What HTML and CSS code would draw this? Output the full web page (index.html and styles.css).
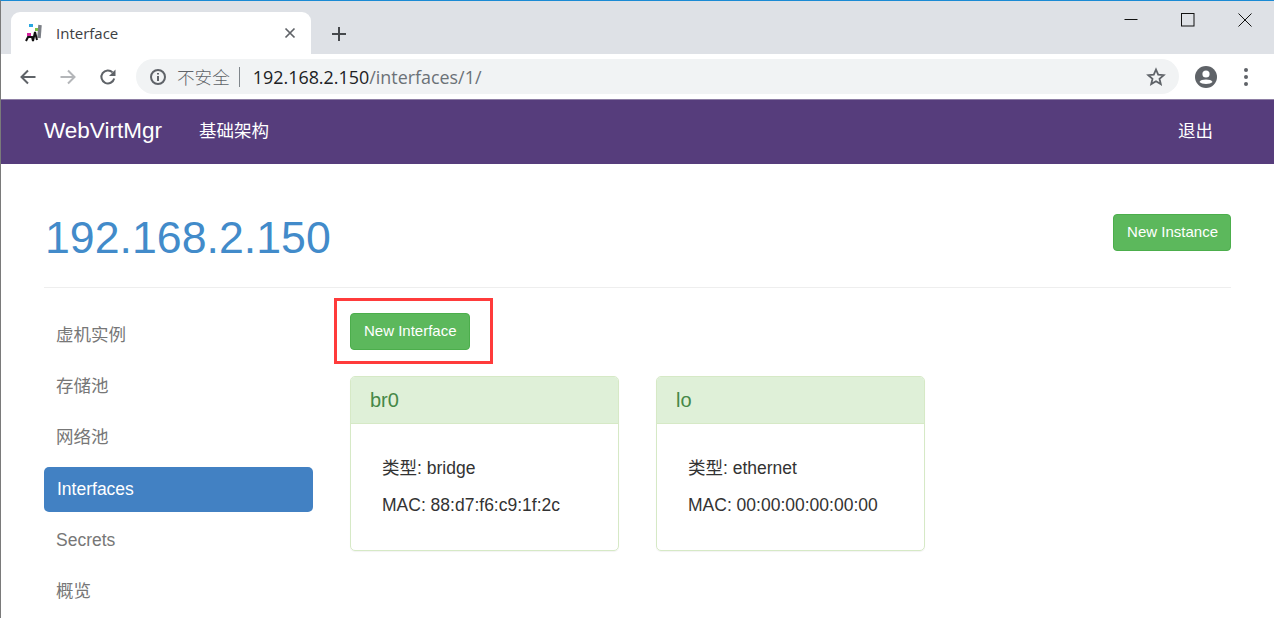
FILE: index.html
```html
<!DOCTYPE html>
<html lang="en">
<head>
  <meta charset="UTF-8" />
  <meta name="viewport" content="width=device-width, initial-scale=1.0"/>
  <title>Interface</title>
  <link rel="stylesheet" href="styles.css">
</head>
<body>
  <div class="window">

    <div class="tabstrip">
      <div class="tab">
        <svg class="favicon" width="20" height="20" viewBox="0 0 20 20">
          <rect x="4" y="1" width="4" height="3" fill="#2aa7e0"/>
          <path d="M15 2 L14 15" stroke="#7b7f86" stroke-width="3.5"/>
          <rect x="10" y="5" width="3" height="3" fill="#7cc242"/>
          <rect x="2" y="10" width="4" height="3" fill="#d6249f"/>
          <path d="M1 18 L3 14 L7 14 L8 18 M8 18 L10 9 L12 17" stroke="#111" stroke-width="2" fill="none"/>
        </svg>
        <span class="tab-title">Interface</span>
        <svg class="tab-close" width="12" height="12" viewBox="0 0 12 12">
          <path d="M1.5 1.5 L10.5 10.5 M10.5 1.5 L1.5 10.5" stroke="#5f6368" stroke-width="1.7"/>
        </svg>
      </div>
      <svg class="new-tab" width="16" height="16" viewBox="0 0 16 16">
        <path d="M8 1 V15 M1 8 H15" stroke="#45484c" stroke-width="2"/>
      </svg>
      <div class="win-controls">
        <svg width="14" height="14" viewBox="0 0 14 14"><path d="M0.5 6.5 H13.5" stroke="#111" stroke-width="1"/></svg>
        <svg width="14" height="14" viewBox="0 0 14 14"><rect x="0.5" y="0.5" width="12.5" height="12.5" fill="none" stroke="#111" stroke-width="1"/></svg>
        <svg width="14" height="14" viewBox="0 0 14 14"><path d="M0.5 0.5 L13.5 13.5 M13.5 0.5 L0.5 13.5" stroke="#111" stroke-width="1"/></svg>
      </div>
    </div>

    <div class="toolbar">
      <svg class="tool" width="18" height="18" viewBox="0 0 18 18"><path d="M16.5 9 H2.5 M9 2.5 L2.5 9 L9 15.5" fill="none" stroke="#5f6368" stroke-width="2"/></svg>
      <svg class="tool" width="18" height="18" viewBox="0 0 18 18"><path d="M1.5 9 H15.5 M9 2.5 L15.5 9 L9 15.5" fill="none" stroke="#b4b6b9" stroke-width="2"/></svg>
      <svg class="tool" width="18" height="18" viewBox="0 0 18 18"><path d="M15.2 10.5 A6.5 6.5 0 1 1 13.6 4.4" fill="none" stroke="#5f6368" stroke-width="2"/><path d="M16.5 1.5 V8 H10 Z" fill="#5f6368"/></svg>
      <div class="omnibox">
        <svg class="info" width="18" height="18" viewBox="0 0 18 18">
          <circle cx="9" cy="9" r="7" fill="none" stroke="#5f6368" stroke-width="2"/>
          <path d="M9 8 V13 M9 5 V6.6" stroke="#5f6368" stroke-width="2"/>
        </svg>
        <span class="insecure">不安全</span>
        <span class="sep"></span>
        <span class="url">192.168.2.150<span class="url-path">/interfaces/1/</span></span>
        <svg class="star" width="20" height="20" viewBox="0 0 20 20">
          <path d="M10 2.5 L12.2 7.6 L17.7 8.1 L13.5 11.7 L14.8 17.1 L10 14.3 L5.2 17.1 L6.5 11.7 L2.3 8.1 L7.8 7.6 Z" fill="none" stroke="#5f6368" stroke-width="1.8"/>
        </svg>
      </div>
      <svg class="avatar" width="22" height="22" viewBox="0 0 22 22">
        <circle cx="11" cy="11" r="11" fill="#5f6368"/>
        <circle cx="11" cy="8" r="3.6" fill="#fff"/>
        <path d="M4.5 16 C6 12.8 16 12.8 17.5 16 C15.5 18.6 6.5 18.6 4.5 16 Z" fill="#fff"/>
      </svg>
      <div class="menu-dots"><i></i><i></i><i></i></div>
    </div>

    <nav class="navbar">
      <a class="brand">WebVirtMgr</a>
      <a class="nav-link">基础架构</a>
      <a class="nav-link nav-right">退出</a>
    </nav>

    <div class="container">
      <div class="page-header">
        <h1>192.168.2.150</h1>
        <a class="btn">New Instance</a>
      </div>

      <div class="columns">
        <ul class="pills">
          <li>虚机实例</li>
          <li>存储池</li>
          <li>网络池</li>
          <li class="active">Interfaces</li>
          <li>Secrets</li>
          <li>概览</li>
        </ul>

        <div class="content">
          <div class="actions">
            <a class="btn">New Interface</a>
            <div class="highlight"></div>
          </div>
          <div class="cards">
            <div class="panel">
              <div class="panel-heading">br0</div>
              <div class="panel-body">
                <p>类型: bridge</p>
                <p>MAC: 88:d7:f6:c9:1f:2c</p>
              </div>
            </div>
            <div class="panel">
              <div class="panel-heading">lo</div>
              <div class="panel-body">
                <p>类型: ethernet</p>
                <p>MAC: 00:00:00:00:00:00</p>
              </div>
            </div>
          </div>
        </div>
      </div>
    </div>

  </div>
</body>
</html>
```
FILE: styles.css
```css
html, body {
  margin: 0;
  padding: 0;
  height: 618px;
  overflow: hidden;
  background-color: #fff;
}

body {
  font-family: "Liberation Sans", "Noto Sans CJK SC", sans-serif;
  font-size: 17.5px;
  color: #333;
}

.window {
  height: 618px;
  box-sizing: border-box;
  border-top: 1px solid #1a8ad4;
  border-left: 1px solid #7a7a7a;
  overflow: hidden;
}

/* browser chrome */
.tabstrip {
  height: 53px;
  background-color: #dee1e6;
  display: flex;
  align-items: flex-end;
}

.tab {
  width: 300px;
  height: 42px;
  margin-left: 10px;
  background-color: #fff;
  border-radius: 9px 9px 0 0;
  display: flex;
  align-items: center;
  box-sizing: border-box;
  padding: 0 15px 0 14px;
}

.favicon {
  margin-right: 11px;
  flex: none;
}

.tab-title {
  font-family: "Open Sans", sans-serif;
  font-size: 15px;
  color: #3c4043;
  flex: 1;
}

.new-tab {
  margin: 0 0 12px 20px;
}

.win-controls {
  margin-left: auto;
  align-self: flex-start;
  display: flex;
  gap: 43px;
  padding: 12px 22px 0 0;
}

.toolbar {
  height: 45px;
  background-color: #fff;
  display: flex;
  align-items: center;
  padding-left: 18px;
}

.tool {
  margin-right: 22px;
  flex: none;
}

.omnibox {
  width: 1043px;
  height: 35px;
  margin-left: -3px;
  background-color: #f1f3f4;
  border-radius: 18px;
  display: flex;
  align-items: center;
  box-sizing: border-box;
  padding: 0 13px;
}

.insecure {
  margin-left: 10px;
  font-size: 17.6px;
  font-weight: 300;
  color: #5f6368;
}

.sep {
  width: 1px;
  height: 20px;
  margin: 0 13px 0 9px;
  background-color: #80868b;
}

.url {
  font-family: "Open Sans", sans-serif;
  font-size: 17.9px;
  color: #202124;
}

.url-path {
  color: #6b7177;
}

.star {
  margin-left: auto;
}

.avatar {
  margin-left: 16px;
  flex: none;
}

.menu-dots {
  margin-left: 27px;
  display: flex;
  flex-direction: column;
  gap: 3px;
}

.menu-dots i {
  width: 4px;
  height: 4px;
  border-radius: 50%;
  background-color: #5f6368;
}

/* site navbar */
.navbar {
  height: 65px;
  background-color: #563d7c;
  border-top: 1px solid #8e7fa5;
  box-sizing: border-box;
  display: flex;
  align-items: center;
  padding: 0 61px 3px 43px;
  color: #fff;
}

.brand {
  font-size: 22.5px;
  margin-right: 37px;
}

.nav-link {
  margin-bottom: 2px;
}

.nav-right {
  margin-left: auto;
}

/* page */
.container {
  padding: 0 43px 0 43px;
}

.page-header {
  height: 124px;
  box-sizing: border-box;
  border-bottom: 1px solid #eee;
  display: flex;
  justify-content: space-between;
  align-items: flex-start;
  padding-top: 50px;
}

h1 {
  margin: -1px 0 0;
  font-size: 44.7px;
  line-height: 50px;
  font-weight: normal;
  color: #428bca;
  padding-left: 1px;
}

.btn {
  display: block;
  font-size: 15px;
  line-height: 21px;
  padding: 6px 13px 8px;
  color: #fff;
  background-color: #5cb85c;
  border: 1px solid #4cae4c;
  border-radius: 4px;
  white-space: nowrap;
}

.page-header .btn {
  padding-left: 13px;
  padding-right: 12px;
}

.columns {
  display: flex;
}

.pills {
  list-style: none;
  width: 269px;
  margin: 25px 0 0;
  padding: 0;
  flex: none;
  display: flex;
  flex-direction: column;
  gap: 6.2px;
}

.pills li {
  height: 45px;
  line-height: 45px;
  padding-left: 12px;
  color: #777;
  border-radius: 5px;
}

.pills li.active {
  background-color: #4281c3;
  color: #fff;
  padding-left: 13px;
}

.content {
  padding: 25px 0 0 37px;
}

.actions {
  position: relative;
  width: 120px;
}

.highlight {
  position: absolute;
  left: -16px;
  top: -15px;
  width: 153px;
  height: 60px;
  border: 3px solid #ff3b3b;
}

.cards {
  display: flex;
  gap: 37px;
  margin-top: 26px;
}

.panel {
  width: 269px;
  height: 175px;
  box-sizing: border-box;
  border: 1px solid #d6e9c6;
  border-radius: 5px;
  box-shadow: 0 1px 1px rgba(0, 0, 0, 0.05);
  overflow: hidden;
}

.panel-heading {
  height: 47px;
  box-sizing: border-box;
  line-height: 46px;
  padding-left: 19px;
  font-size: 20px;
  color: #468847;
  background-color: #dff0d8;
  border-bottom: 1px solid #d6e9c6;
}

.panel-body {
  padding: 32px 0 0 31px;
}

.panel-body p {
  margin: 0 0 12px;
  line-height: 25px;
}
```
